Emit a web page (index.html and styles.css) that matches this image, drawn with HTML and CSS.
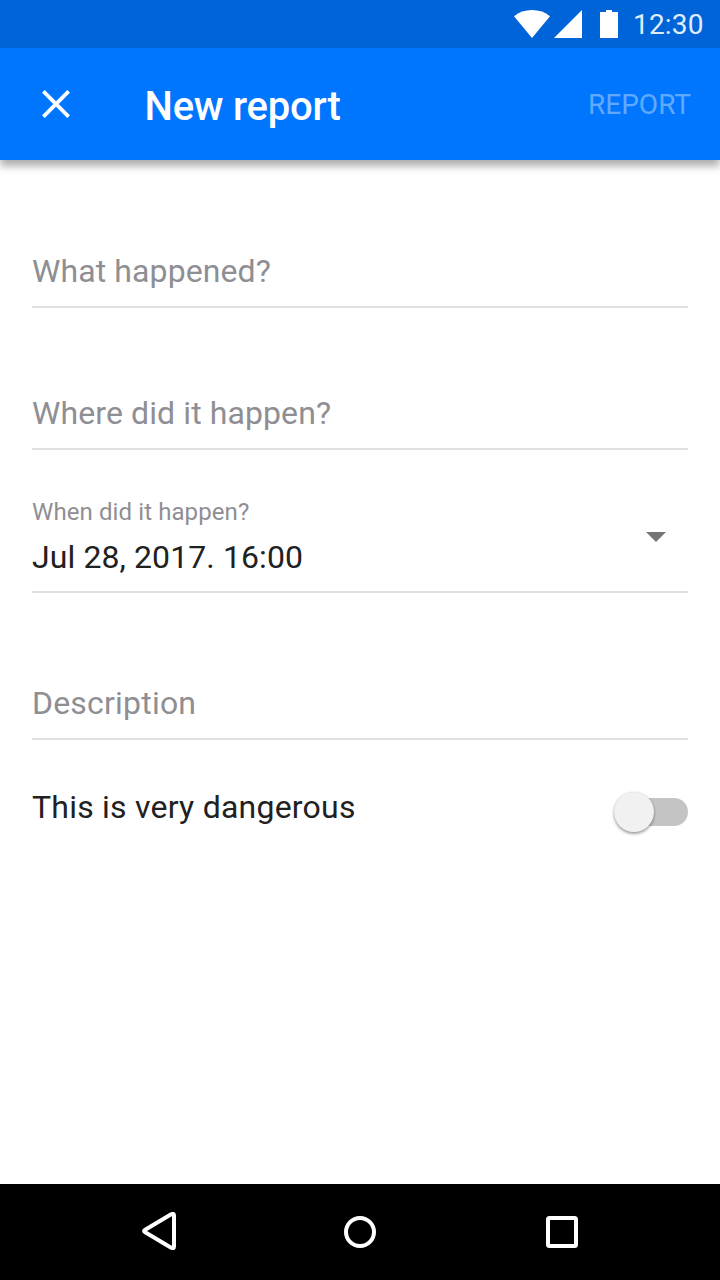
FILE: index.html
```html
<!DOCTYPE html>
<html lang="en">
<head>
<meta charset="utf-8">
<title>New report</title>
<link rel="stylesheet" href="styles.css">
</head>
<body>
<div class="screen">
  <div class="status-bar">
    <svg class="status-icons" width="106" height="28" viewBox="0 0 106 28" fill="#fff">
      <path d="M0 6.3C5 2.2 11 0 18 0s13 2.2 18 6.3L18 28z"/>
      <path d="M40 28L68 0v28z"/>
      <path d="M86 2h6V0h6v2h6v26H86z"/>
    </svg>
    <span class="clock">12:30</span>
  </div>
  <header class="app-bar">
    <button class="close" aria-label="Close">
      <svg width="28" height="28" viewBox="0 0 28 28" stroke="#fff" stroke-width="3.8"><path d="M1.4 1.4l25.2 25.2M26.6 1.4L1.4 26.6"/></svg>
    </button>
    <h1 class="title">New report</h1>
    <button class="submit">REPORT</button>
  </header>
  <main class="form">
    <div class="field field-what"><span class="placeholder what">What happened?</span></div>
    <div class="field field-where"><span class="placeholder where">Where did it happen?</span></div>
    <div class="field field-when">
      <div class="when">
        <span class="label">When did it happen?</span>
        <span class="value">Jul 28, 2017. 16:00</span>
      </div>
      <svg class="caret" width="20" height="10" viewBox="0 0 20 10"><path d="M0 0h20L10 10z" fill="#757575"/></svg>
    </div>
    <div class="field field-description"><span class="placeholder description">Description</span></div>
    <div class="danger">
      <span class="danger-label">This is very dangerous</span>
      <div class="switch"><div class="thumb"></div></div>
    </div>
  </main>
  <nav class="nav-bar">
    <svg class="back" width="34" height="38" viewBox="0 0 34 38" fill="none" stroke="#fff" stroke-width="4" stroke-linejoin="round"><path d="M3.2 17.8L29.2 2.3Q32 1 32 3.5V34.5Q32 37 29.2 35.7L3.2 20.2Q1 19 3.2 17.8z"/></svg>
    <svg width="32" height="32" viewBox="0 0 32 32" fill="none" stroke="#fff" stroke-width="4"><circle cx="16" cy="16" r="14"/></svg>
    <svg width="32" height="32" viewBox="0 0 32 32" fill="none" stroke="#fff" stroke-width="4"><rect x="2" y="2" width="28" height="28" rx="1.5"/></svg>
  </nav>
</div>
</body>
</html>
```
FILE: styles.css
```css
* { box-sizing: border-box; }
body { margin: 0; font-family: Roboto, "Liberation Sans", sans-serif; }
button { border: 0; padding: 0; background: none; font-family: inherit; }
svg { display: block; flex: none; }
span, h1, button { white-space: nowrap; }

.screen { display: flex; flex-direction: column; width: 720px; height: 1280px; background: #fff; overflow: hidden; }

.status-bar { display: flex; align-items: flex-start; height: 48px; padding: 10px 0 0 514px; background: #0064d9; }
.status-icons { margin-right: 13px; }
.clock { font-size: 28px; line-height: 29px; letter-spacing: 0.2px; color: rgba(255, 255, 255, 0.9); }

.app-bar { display: flex; align-items: flex-start; height: 112px; padding: 0 29px 0 42px; background: #0076ff; box-shadow: 0 6px 8px rgba(0, 0, 0, 0.33); }
.close { margin-top: 42px; }
.title { flex: 1; margin: 34px 0 0 74.5px; font-size: 40px; line-height: 50px; font-weight: 500; letter-spacing: -0.22px; color: #fff; }
.submit { margin-top: 40px; font-size: 28px; line-height: 34px; color: rgba(255, 255, 255, 0.4); }

.form { flex: 1; padding: 0 32px; }
.field { display: flex; align-items: flex-end; padding-bottom: 15px; border-bottom: 2px solid #e0e0e0; }
.field-what { height: 148px; }
.field-where { height: 142px; }
.field-when { height: 143px; padding-bottom: 14px; justify-content: space-between; }
.field-description { height: 147px; }
.placeholder, .value, .danger-label { font-size: 32px; line-height: 40px; letter-spacing: 0.1px; }
.placeholder, .label { color: #8e8e93; }
.value, .danger-label { color: #212121; }
.description { letter-spacing: 0.2px; }
.danger-label { letter-spacing: 0.23px; }
.when { display: flex; flex-direction: column; gap: 10px; }
.label { font-size: 24px; line-height: 30px; letter-spacing: 0.1px; }
.caret { margin: 0 22px 35px 0; }

.danger { display: flex; justify-content: space-between; padding-top: 47px; }
.switch { display: flex; width: 72px; height: 28px; margin-top: 11px; background: linear-gradient(90deg, transparent 16px, #c4c4c4 16px); border-radius: 14px; }
.thumb { width: 40px; height: 40px; margin: -6px 0 0 -2px; border-radius: 50%; background: #f1f1f1; box-shadow: 0 2px 3px rgba(0, 0, 0, 0.35), 0 0 2px rgba(0, 0, 0, 0.15); }

.nav-bar { display: grid; grid-template-columns: 202px 202px 32px; align-items: center; height: 96px; padding-left: 142px; background: #000; }
.back { margin-bottom: 2px; }
```
